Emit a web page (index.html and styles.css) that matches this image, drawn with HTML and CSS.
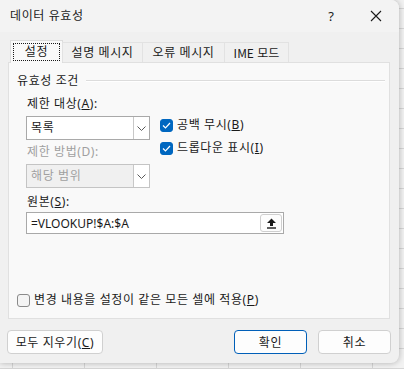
FILE: index.html
```html
<!DOCTYPE html>
<html lang="ko">
<head>
    <meta charset="UTF-8">
    <meta name="viewport" content="width=device-width, initial-scale=1.0">
    <title>데이터 유효성</title>
    <link rel="stylesheet" href="styles.css">
</head>
<body>
    <div class="dialog">
        <div class="titlebar">
            <span class="title">데이터 유효성</span>
            <span class="help">?</span>
            <span class="close">
                <svg width="12" height="12" viewBox="0 0 12 12"><path d="M1 1 L11 11 M11 1 L1 11" stroke="#1a1a1a" stroke-width="1.1" fill="none"/></svg>
            </span>
        </div>

        <div class="tabs">
            <div class="tab active"><span class="focus">설정</span></div>
            <div class="tab tab-input">설명 메시지</div>
            <div class="tab tab-error">오류 메시지</div>
            <div class="tab tab-ime">IME 모드</div>
        </div>

        <div class="panel">
            <div class="group-head">
                <span>유효성 조건</span>
                <div class="group-line"></div>
            </div>

            <div class="criteria">
                <div class="criteria-left">
                    <div class="label">제한 대상(<u>A</u>):</div>
                    <div class="combo">
                        <span class="combo-text">목록</span>
                        <span class="combo-arrow">
                            <svg width="9" height="5" viewBox="0 0 9 5"><path d="M0.5 0.5 L4.5 4.5 L8.5 0.5" stroke="#5a5a5a" fill="none"/></svg>
                        </span>
                    </div>
                    <div class="label disabled">제한 방법(D):</div>
                    <div class="combo disabled">
                        <span class="combo-text">해당 범위</span>
                        <span class="combo-arrow">
                            <svg width="9" height="5" viewBox="0 0 9 5"><path d="M0.5 0.5 L4.5 4.5 L8.5 0.5" stroke="#5a5a5a" fill="none"/></svg>
                        </span>
                    </div>
                </div>
                <div class="criteria-right">
                    <div class="check-row">
                        <span class="check on">
                            <svg width="9" height="7" viewBox="0 0 9 7"><path d="M1 3.5 L3.5 6 L8 1" stroke="#fff" stroke-width="1.2" fill="none"/></svg>
                        </span>
                        <span>공백 무시(<u>B</u>)</span>
                    </div>
                    <div class="check-row">
                        <span class="check on">
                            <svg width="9" height="7" viewBox="0 0 9 7"><path d="M1 3.5 L3.5 6 L8 1" stroke="#fff" stroke-width="1.2" fill="none"/></svg>
                        </span>
                        <span>드롭다운 표시(<u>I</u>)</span>
                    </div>
                </div>
            </div>

            <div class="label source-label">원본(<u>S</u>):</div>
            <div class="source">
                <span class="source-text">=VLOOKUP!$A:$A</span>
                <span class="collapse">
                    <svg width="11" height="11" viewBox="0 0 11 11"><path d="M5.5 0.5 L10 5 L7 5 L7 8 L4 8 L4 5 L1 5 Z" fill="#1a1a1a"/><rect x="1" y="9.3" width="9" height="1.4" fill="#1a1a1a"/></svg>
                </span>
            </div>

            <div class="check-row apply-all">
                <span class="check"></span>
                <span>변경 내용을 설정이 같은 모든 셀에 적용(<u>P</u>)</span>
            </div>
        </div>

        <div class="footer">
            <button class="btn clear">모두 지우기(<u>C</u>)</button>
            <div class="footer-right">
                <button class="btn primary">확인</button>
                <button class="btn">취소</button>
            </div>
        </div>
    </div>
</body>
</html>
```

FILE: styles.css
```css
body {
    margin: 0;
    width: 404px;
    height: 369px;
    overflow: hidden;
    font-family: "Noto Sans", "Noto Sans CJK KR", sans-serif;
    font-size: 12px;
    letter-spacing: 0.6px;
    color: #1a1a1a;
    background-color: #f2f2f2;
    background-image:
        linear-gradient(to right, #d6d6d6 1px, transparent 1px),
        linear-gradient(to bottom, #d6d6d6 1px, transparent 1px);
    background-size: 72px 20px;
    background-position: 12px 8px;
}

u {
    text-decoration: underline;
    text-underline-offset: 1px;
}

.dialog {
    width: 399px;
    height: 363px;
    background: #f0f0f0;
    border-radius: 0 8px 8px 0;
    box-shadow: 0 0 6px rgba(0,0,0,0.28);
    display: flex;
    flex-direction: column;
    overflow: hidden;
}

.titlebar {
    height: 32px;
    background: #f3f3f3;
    display: flex;
    align-items: center;
    padding-left: 10px;
    flex-shrink: 0;
}

.title {
    flex: 1;
    font-size: 12px;
    line-height: 16px;
}

.help {
    width: 14px;
    text-align: center;
    font-size: 13px;
    letter-spacing: 0;
    margin-right: 32px;
}

.close {
    display: flex;
    margin-right: 17px;
}

.tabs {
    display: flex;
    align-items: flex-end;
    margin-top: 8px;
    padding-left: 10px;
    height: 22px;
    position: relative;
    z-index: 1;
}

.tab {
    height: 20px;
    line-height: 20px;
    padding: 0;
    text-align: center;
    border: 1px solid #e2e2e2;
    border-bottom: none;
    background: #f0f0f0;
    margin-left: -1px;
    box-sizing: border-box;
}

.tab-input {
    width: 81px;
}

.tab-error {
    width: 83px;
}

.tab-ime {
    width: 65px;
    letter-spacing: 0;
    font-family: "Noto Sans CJK KR", sans-serif;
}

.tab.active {
    height: 23px;
    margin-bottom: -1px;
    padding: 2px 2px 0;
    background: #f9f9f9;
    border-color: #dcdcdc;
    margin-left: 0;
    width: 53px;
    line-height: 18px;
}

.focus {
    display: block;
    border: 1px dotted #1a1a1a;
    text-align: center;
    height: 18px;
    box-sizing: border-box;
    line-height: 16px;
}

.panel {
    margin-left: 8px;
    width: 382px;
    height: 257px;
    box-sizing: border-box;
    background: #f9f9f9;
    border: 1px solid #e0e0e0;
    padding: 10px 0 0 8px;
    display: flex;
    flex-direction: column;
}

.group-head {
    display: flex;
    align-items: center;
    height: 16px;
    line-height: 16px;
}

.group-line {
    flex: 1;
    margin: 0 4px 0 7px;
    border-top: 1px solid #dcdcdc;
    border-bottom: 1px solid #ffffff;
}

.criteria {
    display: flex;
    margin-top: 7px;
    padding-left: 9px;
    gap: 10px;
}

.criteria-left {
    width: 124px;
    display: flex;
    flex-direction: column;
}

.label {
    height: 16px;
    line-height: 16px;
    padding-left: 1px;
}

.label.disabled {
    color: #a0a0a0;
    margin-top: 4px;
}

.combo {
    margin-top: 4px;
    height: 24px;
    box-sizing: border-box;
    border: 1px solid #a9a9a9;
    background: #fff;
    display: flex;
}

.combo.disabled {
    background: #f0f0f0;
    border-color: #c4c4c4;
    color: #a0a0a0;
}

.combo-text {
    flex: 1;
    padding-left: 4px;
    line-height: 22px;
}

.combo-arrow {
    width: 15px;
    border-left: 1px solid #c8c8c8;
    background: #fff;
    display: flex;
    align-items: center;
    justify-content: center;
}

.criteria-right {
    display: flex;
    flex-direction: column;
    gap: 7px;
    padding-top: 21px;
}

.check-row {
    display: flex;
    align-items: center;
    gap: 4px;
    height: 16px;
    line-height: 16px;
}

.check {
    width: 13px;
    height: 13px;
    box-sizing: border-box;
    border-radius: 3px;
    border: 1px solid #8a8a8a;
    background: #f4f4f4;
    display: flex;
    align-items: center;
    justify-content: center;
}

.check.on {
    background: #0067c0;
    border-color: #0067c0;
}

.source-label {
    margin-top: 6px;
    margin-left: 9px;
}

.source {
    margin-top: 2px;
    margin-left: 9px;
    width: 258px;
    height: 22px;
    box-sizing: border-box;
    border: 1px solid #a9a9a9;
    background: #fff;
    display: flex;
    align-items: center;
    padding: 0 1px 0 4px;
}

.source-text {
    flex: 1;
    letter-spacing: 0;
}

.collapse {
    width: 22px;
    height: 18px;
    box-sizing: border-box;
    border: 1px solid #cfcfcf;
    border-radius: 3px;
    background: #fdfdfd;
    display: flex;
    align-items: center;
    justify-content: center;
}

.apply-all {
    margin-top: 58px;
    padding-left: 0;
}

.footer {
    display: flex;
    justify-content: space-between;
    padding: 11px 8px 0 7px;
}

.footer-right {
    display: flex;
    gap: 11px;
}

.btn {
    font-family: inherit;
    font-size: 12px;
    letter-spacing: 0.6px;
    color: #1a1a1a;
    height: 24px;
    width: 73px;
    padding: 0;
    background: #fdfdfd;
    border: 1px solid #d0d0d0;
    border-radius: 4px;
}

.btn.clear {
    width: 96px;
}

.btn.primary {
    border-color: #005fb8;
}
```
